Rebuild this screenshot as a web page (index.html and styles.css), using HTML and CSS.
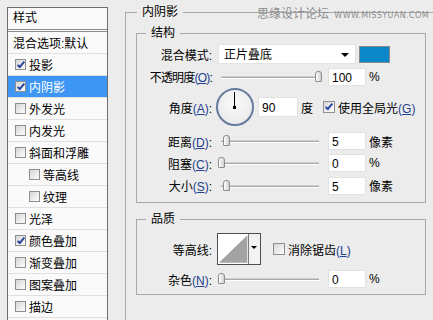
FILE: index.html
```html
<!DOCTYPE html>
<html lang="zh-CN">
<head>
    <meta charset="UTF-8">
    <title>图层样式 - 内阴影</title>
    <link rel="stylesheet" href="styles.css">
</head>
<body>

<div class="dialog">
    <!-- Stil-Liste links -->
    <div class="style-list">
        <div class="style-head">样式</div>
        <div class="style-item">混合选项:默认</div>
        <div class="style-item"><span class="cb checked"></span>投影</div>
        <div class="style-item selected"><span class="cb checked"></span>内阴影</div>
        <div class="style-item"><span class="cb"></span>外发光</div>
        <div class="style-item"><span class="cb"></span>内发光</div>
        <div class="style-item"><span class="cb"></span>斜面和浮雕</div>
        <div class="style-item sub"><span class="cb"></span>等高线</div>
        <div class="style-item sub"><span class="cb"></span>纹理</div>
        <div class="style-item"><span class="cb"></span>光泽</div>
        <div class="style-item"><span class="cb checked"></span>颜色叠加</div>
        <div class="style-item"><span class="cb"></span>渐变叠加</div>
        <div class="style-item"><span class="cb"></span>图案叠加</div>
        <div class="style-item"><span class="cb"></span>描边</div>
    </div>

    <fieldset class="panel">
        <legend>内阴影</legend>

        <fieldset class="group structure">
            <legend>结构</legend>

            <div class="row">
                <span class="label">混合模式:</span>
                <div class="select">正片叠底<span class="arrow"></span></div>
                <span class="swatch"></span>
            </div>

            <div class="row row-opacity">
                <span class="label tight">不透明度<span class="key">(<u>O</u>)</span>:</span>
                <div class="slider"><span class="thumb" style="left: 97px;"></span></div>
                <div class="num">100</div>
                <span class="unit">%</span>
            </div>

            <div class="row row-angle">
                <span class="label">角度<span class="key">(<u>A</u>)</span>:</span>
                <div class="dial"><span class="hand"></span><span class="pin"></span></div>
                <div class="num num-angle">90</div>
                <span class="unit">度</span>
                <span class="cb big checked global"></span>
                <span>使用全局光<span class="key">(<u>G</u>)</span></span>
            </div>

            <div class="row row-distance">
                <span class="label">距离<span class="key">(<u>D</u>)</span>:</span>
                <div class="slider"><span class="thumb" style="left: 5px;"></span></div>
                <div class="num">5</div>
                <span class="unit">像素</span>
            </div>

            <div class="row">
                <span class="label">阻塞<span class="key">(<u>C</u>)</span>:</span>
                <div class="slider"><span class="thumb" style="left: 0px;"></span></div>
                <div class="num">0</div>
                <span class="unit">%</span>
            </div>

            <div class="row row-size">
                <span class="label">大小<span class="key">(<u>S</u>)</span>:</span>
                <div class="slider"><span class="thumb" style="left: 5px;"></span></div>
                <div class="num">5</div>
                <span class="unit">像素</span>
            </div>
        </fieldset>

        <fieldset class="group quality">
            <legend>品质</legend>

            <div class="row row-contour">
                <span class="label">等高线:</span>
                <div class="contour">
                    <svg class="curve" width="31" height="30" viewBox="0 0 31 30">
                        <polygon points="1,29 30,1 30,29" fill="#a3a3a3"/>
                    </svg>
                    <span class="contour-drop"><span class="arrow small"></span></span>
                </div>
                <span class="cb big antialias"></span>
                <span>消除锯齿<span class="key">(<u>L</u>)</span></span>
            </div>

            <div class="row row-noise">
                <span class="label">杂色<span class="key">(<u>N</u>)</span>:</span>
                <div class="slider"><span class="thumb" style="left: 0px;"></span></div>
                <div class="num">0</div>
                <span class="unit">%</span>
            </div>
        </fieldset>
    </fieldset>

    <div class="watermark">思缘设计论坛 <span>WWW.MISSYUAN.COM</span></div>
</div>

</body>
</html>
```

FILE: styles.css
```css
body {
    margin: 0;
    padding: 0;
    background-color: #ececec;
    font-family: "Liberation Sans", "Noto Sans CJK SC", sans-serif;
    font-size: 12px;
    color: #000;
    overflow: hidden;
}

.dialog {
    position: relative;
    display: flex;
    align-items: flex-start;
    width: 433px;
    height: 320px;
    overflow: hidden;
}

/* Liste links */
.style-list {
    margin: 7px 0 0 7px;
    width: 99px;
    height: 330px;
    border: 1px solid #6d6d6d;
    border-bottom: none;
    background-color: #fafafa;
    flex-shrink: 0;
}

.style-head {
    height: 21px;
    line-height: 21px;
    padding-left: 5px;
    border-bottom: 3px double #8c8c8c;
}

.style-item {
    display: flex;
    align-items: center;
    height: 21px;
    padding-left: 5px;
    border-bottom: 1px solid #e0e0e0;
    white-space: nowrap;
}

.style-item .cb {
    margin: 0 3px 0 2px;
}

.style-item.sub {
    padding-left: 19px;
}

.style-item.selected {
    background-color: #3d96f4;
    color: white;
}

.cb {
    position: relative;
    display: inline-block;
    width: 9px;
    height: 9px;
    border: 1px solid #8f8f8f;
    background: linear-gradient(135deg, #d6d6d6, #fdfdfd);
    flex-shrink: 0;
}

.cb.big {
    width: 10px;
    height: 10px;
}

.cb.checked::after {
    content: '';
    position: absolute;
    left: 3px;
    top: 0px;
    width: 2px;
    height: 6px;
    border-right: 2px solid #2a47a0;
    border-bottom: 2px solid #2a47a0;
    transform: rotate(40deg);
}

/* Gruppen rechts */
fieldset {
    margin: 0;
    padding: 0;
    min-width: 0;
    border: 1px solid #a8a8a8;
}

legend {
    padding: 0 6px;
    line-height: 14px;
}

.panel {
    margin: 5px 0 0 17px;
    width: 330px;
    height: 340px;
    padding-left: 10px;
    flex-shrink: 0;
}

.panel > legend {
    margin-left: 1px;
    padding: 0 5px;
}

.group {
    width: 288px;
}

.group > legend {
    margin-left: 9px;
    padding: 0 5px;
}

.structure {
    margin-top: 7px;
    padding: 3px 0 5px 0;
}

.quality {
    margin-top: 9px;
    padding: 7px 0 4px 0;
}

.row {
    display: flex;
    align-items: center;
    height: 22px;
    white-space: nowrap;
}

.row-opacity {
    height: 23px;
}

.row-angle {
    height: 38px;
}

.row-distance {
    margin-top: 4px;
}

.row-size {
    height: 23px;
}

.row-contour {
    height: 32px;
}

.row-noise {
    margin-top: 3px;
}

.label {
    width: 75px;
    margin-right: 6px;
    text-align: right;
    flex-shrink: 0;
}

.label.tight {
    letter-spacing: -0.8px;
}

.key {
    color: #22408f;
}

.select {
    position: relative;
    width: 138px;
    height: 20px;
    line-height: 20px;
    padding-left: 5px;
    background-color: white;
    border: 1px solid #e4e4e4;
    box-sizing: border-box;
}

.arrow {
    position: absolute;
    right: 6px;
    top: 8px;
    width: 0;
    height: 0;
    border-left: 4px solid transparent;
    border-right: 4px solid transparent;
    border-top: 4px solid #000;
}

.arrow.small {
    right: 3px;
    top: 12px;
    border-left-width: 3px;
    border-right-width: 3px;
    border-top-width: 3px;
}

.swatch {
    width: 29px;
    height: 15px;
    margin-left: 3px;
    background-color: #0a87c8;
    border: 1px solid #8a8a8a;
}

.slider {
    position: relative;
    width: 104px;
    height: 14px;
    flex-shrink: 0;
}

.slider::before {
    content: '';
    position: absolute;
    left: 3px;
    right: 3px;
    top: 6px;
    height: 1px;
    background-color: #a9a9a9;
    border-bottom: 1px solid #fff;
    border-top: 1px solid #cfcfcf;
}

.thumb {
    position: absolute;
    top: 1px;
    width: 5px;
    height: 9px;
    border: 1px solid #8d8d8d;
    border-radius: 3px 3px 1px 1px;
    background: linear-gradient(90deg, #fff, #cfcfcf);
}

.num {
    width: 38px;
    height: 18px;
    line-height: 18px;
    margin-left: 6px;
    padding-left: 3px;
    box-sizing: border-box;
    background-color: white;
    border: 1px solid #e2e2e2;
}

.num-angle {
    width: 40px;
    height: 20px;
    line-height: 20px;
    margin-left: 4px;
}

.unit {
    margin-left: 3px;
}

.dial {
    position: relative;
    width: 34px;
    height: 34px;
    margin-left: -2px;
    border: 2px solid #687a9e;
    border-radius: 50%;
    background: radial-gradient(circle at 50% 40%, #fafafa, #e6e6e6);
    flex-shrink: 0;
}

.hand {
    position: absolute;
    left: 16px;
    top: 2px;
    width: 1px;
    height: 16px;
    background-color: #000;
}

.pin {
    position: absolute;
    left: 15px;
    top: 16px;
    width: 3px;
    height: 3px;
    background-color: #000;
}

.global {
    margin: 0 3px 0 10px;
}

.contour {
    position: relative;
    display: flex;
    width: 42px;
    height: 30px;
    margin-left: -1px;
    border: 1px solid #4e4e4e;
    background-color: white;
}

.curve {
    display: block;
}

.contour-drop {
    position: relative;
    width: 11px;
    border-left: 1px solid #7a7a7a;
    background-color: #f2f2f2;
}

.antialias {
    margin: 0 3px 0 12px;
}

.watermark {
    position: absolute;
    top: 7px;
    left: 257px;
    color: #8e8e8e;
    font-size: 12px;
    line-height: 14px;
    white-space: nowrap;
}

.watermark span {
    font-family: "DejaVu Sans", sans-serif;
    font-size: 8px;
    letter-spacing: 0.4px;
    margin-left: 2px;
}
```
